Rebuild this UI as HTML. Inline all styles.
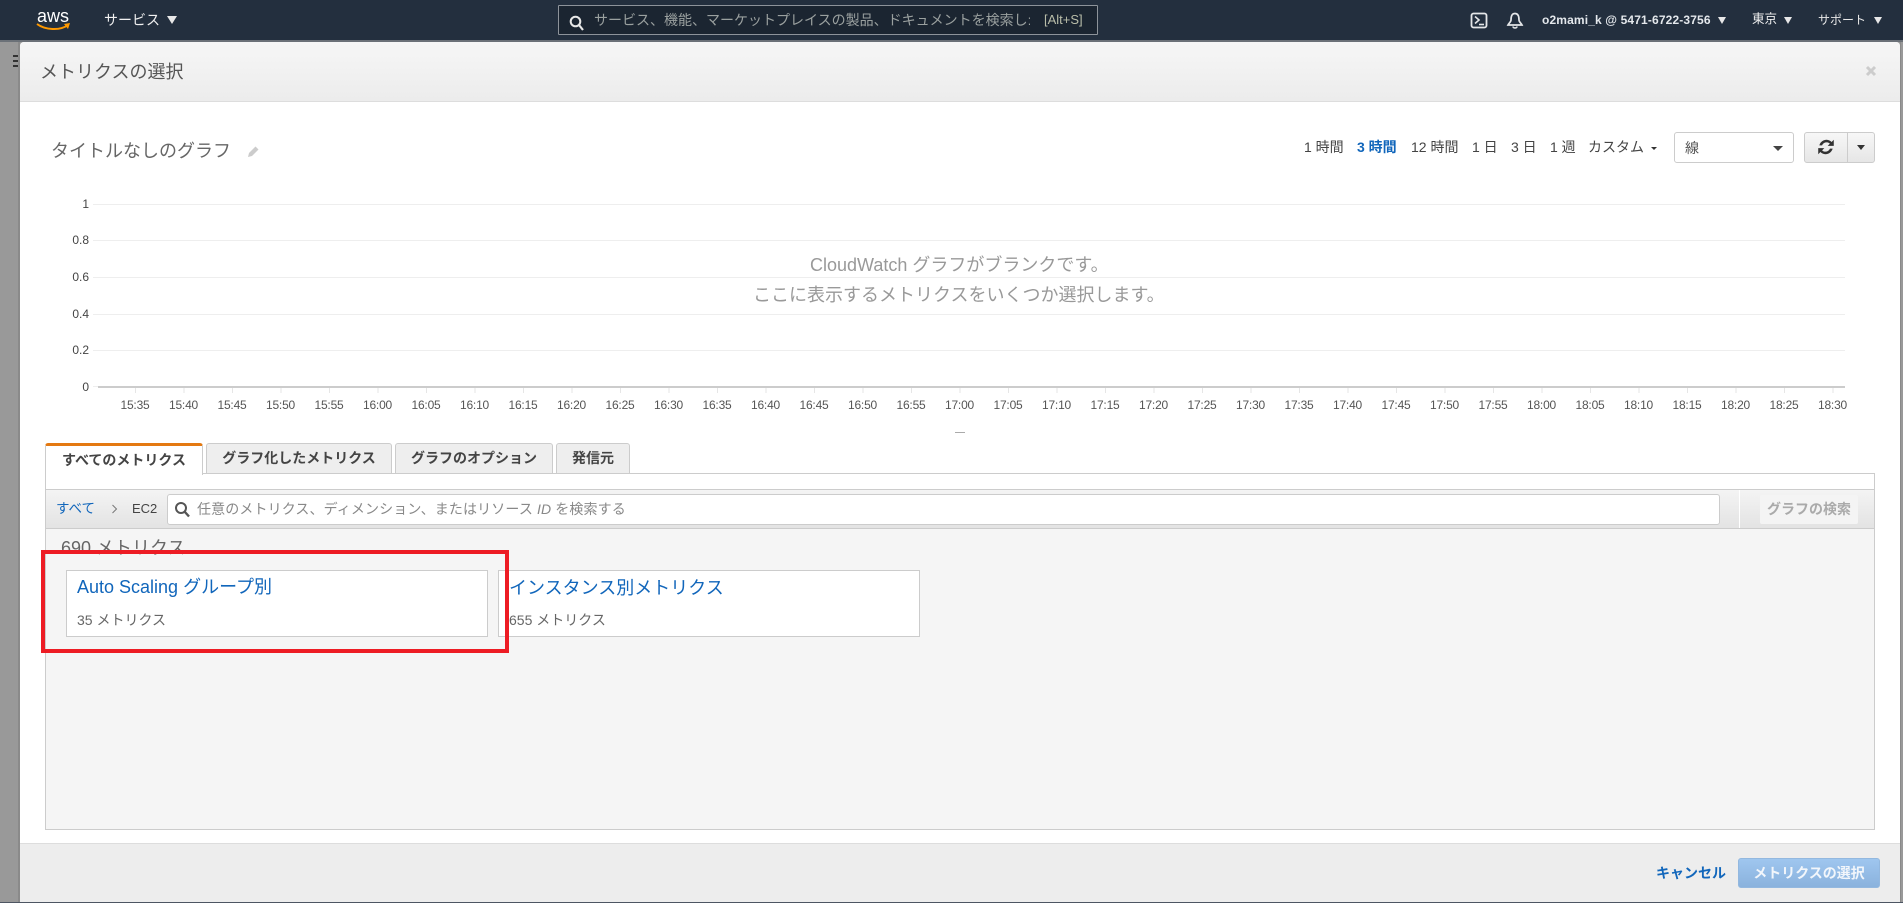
<!DOCTYPE html>
<html lang="ja"><head><meta charset="utf-8"><title>メトリクスの選択</title>
<style>
*{box-sizing:border-box}
html,body{margin:0;padding:0;width:1903px;height:903px;overflow:hidden;background:#999}
body{position:relative;font-family:"Liberation Sans","Noto Sans CJK JP",sans-serif;font-size:14px;color:#444}
.a{position:absolute;white-space:nowrap}
.t{position:absolute;white-space:nowrap;line-height:20px;height:20px}
.tri{position:absolute;width:0;height:0;border-left:5px solid transparent;border-right:5px solid transparent;border-top:8px solid #e8e8e8}
.car{position:absolute;width:0;height:0;border-left:4px solid transparent;border-right:4px solid transparent;border-top:4px solid #444}
.grid{position:absolute;left:93px;width:1752px;height:1px;background:#eee}
.yl{position:absolute;right:1814px;font-size:12px;line-height:14px;color:#444}
.tab{position:absolute;top:443px;height:31px;background:#eee;border:1px solid #ccc;border-radius:3px 3px 0 0;text-align:center;font-weight:bold;line-height:29px;font-size:14px;color:#444}
.card{position:absolute;top:570px;height:67px;background:#fff;border:1px solid #ccc}
#labels{position:absolute;left:110.75px;top:398px;display:flex;font-size:12px;line-height:14px;color:#555;letter-spacing:-.2px}
#labels span{width:48.5px;text-align:center;flex:none}
</style></head><body>

<!-- nav -->
<div class="a" style="left:0;top:0;width:1903px;height:41px;background:#232f3e"></div>
<div class="a" style="left:0;top:40px;width:1903px;height:2px;background:#6b7178"></div>
<div class="t" style="left:37px;top:6px;font-size:18px;color:#fff;line-height:20px">aws</div>
<svg class="a" style="left:36px;top:22px" width="35" height="10" viewBox="0 0 35 10"><path d="M1 2C9 8 24 9 32 3" fill="none" stroke="#f90" stroke-width="2"/><path d="M28 2L34 1L32 7" fill="#f90"/></svg>
<div class="t" style="left:104px;top:10px;color:#f0f0f0">サービス</div>
<div class="tri" style="left:167px;top:16px"></div>
<div class="a" style="left:558px;top:5px;width:540px;height:30px;background:#1b2531;border:1px solid #8d939a;border-radius:1px"></div>
<svg class="a" style="left:568px;top:15px" width="18" height="16" viewBox="0 0 18 16"><circle cx="7.5" cy="6.5" r="4.8" fill="none" stroke="#e8e8e8" stroke-width="2"/><path d="M11 10L15 15" stroke="#e8e8e8" stroke-width="2.2"/></svg>
<div class="t" style="left:594px;top:10px;width:436px;overflow:hidden;color:#9aa09f">サービス、機能、マーケットプレイスの製品、ドキュメントを検索し:</div>
<div class="t" style="left:1044px;top:10px;color:#b9bda9;font-size:13px">[Alt+S]</div>
<svg class="a" style="left:1470px;top:12px" width="18" height="17" viewBox="0 0 18 17"><rect x="1.5" y="1.5" width="15" height="14" rx="2" fill="none" stroke="#e4e6e8" stroke-width="1.8"/><path d="M5 4.5L9 8L5 11.5" fill="none" stroke="#e4e6e8" stroke-width="1.6"/><path d="M9 12.5H14" stroke="#e4e6e8" stroke-width="1.6"/></svg>
<svg class="a" style="left:1506px;top:12px" width="18" height="17" viewBox="0 0 18 17"><path d="M9 1.5C5.5 1.5 5 5 5 8C5 10 3 11 2 13H16C15 11 13 10 13 8C13 5 12.5 1.5 9 1.5Z" fill="none" stroke="#e4e6e8" stroke-width="1.7"/><path d="M7 14.5C7 16.5 11 16.5 11 14.5" fill="none" stroke="#e4e6e8" stroke-width="1.6"/></svg>
<div class="t" style="left:1542px;top:10px;font-size:12px;font-weight:bold;color:#e4e8ec;width:172px;letter-spacing:.14px">o2mami_k @ 5471-6722-3756</div>
<div class="tri" style="left:1718px;top:17px;border-top-width:7px;border-left-width:4.5px;border-right-width:4.5px"></div>
<div class="t" style="left:1752px;top:9px;font-size:12.5px;color:#f0f0f0">東京</div>
<div class="tri" style="left:1784px;top:17px;border-top-width:7px;border-left-width:4.5px;border-right-width:4.5px"></div>
<div class="t" style="left:1818px;top:10px;font-size:12px;color:#e8e8e8">サポート</div>
<div class="tri" style="left:1874px;top:17px;border-top-width:7px;border-left-width:4.5px;border-right-width:4.5px"></div>

<!-- background hamburger -->
<div class="a" style="left:13px;top:55px;width:7px;height:2px;background:#333"></div>
<div class="a" style="left:13px;top:60px;width:7px;height:2px;background:#333"></div>
<div class="a" style="left:13px;top:65px;width:7px;height:2px;background:#333"></div>

<!-- modal -->
<div class="a" style="left:18px;top:42px;width:2px;height:860px;background:#8a8a8a"></div>
<div class="a" style="left:1900px;top:42px;width:1px;height:860px;background:#8a8a8a"></div>
<div class="a" style="left:20px;top:42px;width:1880px;height:860px;background:#fff;border-radius:4px 4px 0 0"></div>
<div class="a" style="left:20px;top:42px;width:1880px;height:60px;background:linear-gradient(#f6f6f6,#ececec);border-bottom:1px solid #ddd;border-radius:4px 4px 0 0"></div>
<div class="t" style="left:40px;top:62px;font-size:18px;color:#555">メトリクスの選択</div>
<svg class="a" style="left:1865px;top:65px" width="12" height="12" viewBox="0 0 12 12"><path d="M2 2L10 10M10 2L2 10" stroke="#ccc" stroke-width="3"/></svg>

<div class="t" style="left:51px;top:141px;font-size:18px;color:#666">タイトルなしのグラフ</div>
<svg class="a" style="left:246px;top:145px" width="14" height="14" viewBox="0 0 14 14"><path d="M2 12L3 8L9.5 1.5L12.5 4.5L6 11Z" fill="#ccc"/></svg>

<div class="t" style="left:1304px;top:137px;color:#444">1 時間</div>
<div class="t" style="left:1357px;top:137px;color:#1166bb;font-weight:bold">3 時間</div>
<div class="t" style="left:1411px;top:137px;color:#444">12 時間</div>
<div class="t" style="left:1472px;top:137px;color:#444">1 日</div>
<div class="t" style="left:1511px;top:137px;color:#444">3 日</div>
<div class="t" style="left:1550px;top:137px;color:#444">1 週</div>
<div class="t" style="left:1588px;top:137px;color:#444">カスタム</div>
<div class="car" style="left:1651px;top:147px;border-width:3px 3px 0;border-top-color:#333;border-left-color:transparent;border-right-color:transparent"></div>

<div class="a" style="left:1674px;top:132px;width:120px;height:31px;border:1px solid #ccc;border-radius:3px;background:#fff"></div>
<div class="t" style="left:1685px;top:138px;color:#555">線</div>
<div class="car" style="left:1773px;top:146px;border-width:5px 5px 0"></div>
<div class="a" style="left:1804px;top:132px;width:71px;height:31px;border:1px solid #ccc;border-radius:3px;background:linear-gradient(#f7f7f7,#e6e6e6)"></div>
<div class="a" style="left:1847px;top:133px;width:1px;height:29px;background:#ccc"></div>
<svg class="a" style="left:1816px;top:137px" width="20" height="20" viewBox="0 0 18 18"><path d="M3 7.5C4 4 7 2.5 9.5 2.5C11.5 2.5 13 3.5 14 4.5L16 2.5V8H10.5L12.5 6C11.5 5 10.5 4.8 9.5 4.8C7.5 4.8 6 6 5.5 7.5Z M15 10.5C14 14 11 15.5 8.5 15.5C6.5 15.5 5 14.5 4 13.5L2 15.5V10H7.5L5.5 12C6.5 13 7.5 13.2 8.5 13.2C10.5 13.2 12 12 12.5 10.5Z" fill="#333"/></svg>
<div class="car" style="left:1857px;top:145px;border-width:5px 4.5px 0;border-top-color:#333"></div>

<!-- chart -->
<div class="grid" style="top:204px"></div>
<div class="grid" style="top:240px"></div>
<div class="grid" style="top:277px"></div>
<div class="grid" style="top:314px"></div>
<div class="grid" style="top:350px"></div>
<div class="yl" style="top:197px">1</div>
<div class="yl" style="top:233px">0.8</div>
<div class="yl" style="top:270px">0.6</div>
<div class="yl" style="top:307px">0.4</div>
<div class="yl" style="top:343px">0.2</div>
<div class="yl" style="top:380px">0</div>
<div class="a" style="left:93px;top:386px;width:5px;height:1px;background:#eee"></div>
<div class="a" style="left:98px;top:386px;width:1747px;height:2px;background:#ccc"></div>
<div class="a" style="left:134.5px;top:388px;width:1700px;height:5px;background:repeating-linear-gradient(90deg,#e6e6e6 0,#e6e6e6 1px,transparent 1px,transparent 48.5px)"></div>
<div id="labels"><span>15:35</span><span>15:40</span><span>15:45</span><span>15:50</span><span>15:55</span><span>16:00</span><span>16:05</span><span>16:10</span><span>16:15</span><span>16:20</span><span>16:25</span><span>16:30</span><span>16:35</span><span>16:40</span><span>16:45</span><span>16:50</span><span>16:55</span><span>17:00</span><span>17:05</span><span>17:10</span><span>17:15</span><span>17:20</span><span>17:25</span><span>17:30</span><span>17:35</span><span>17:40</span><span>17:45</span><span>17:50</span><span>17:55</span><span>18:00</span><span>18:05</span><span>18:10</span><span>18:15</span><span>18:20</span><span>18:25</span><span>18:30</span></div>
<div class="a" style="left:955px;top:432px;width:10px;height:1px;background:#aaa"></div>
<div class="t" style="left:810px;top:255px;font-size:18px;color:#999">CloudWatch グラフがブランクです。</div>
<div class="t" style="left:753px;top:285px;font-size:18px;color:#999">ここに表示するメトリクスをいくつか選択します。</div>

<!-- panel -->
<div class="a" style="left:45px;top:473px;width:1830px;height:357px;background:#f5f5f5;border:1px solid #ccc"></div>
<div class="a" style="left:46px;top:474px;width:1828px;height:15px;background:#fff"></div>
<div class="a" style="left:46px;top:489px;width:1828px;height:40px;background:linear-gradient(#f4f4f4,#e3e3e3);border-top:1px solid #ccc;border-bottom:1px solid #ccc"></div>
<div class="tab" style="left:45px;width:158px;background:#fff;border-top:3px solid #e47911;border-bottom:0;line-height:28px;height:32px">すべてのメトリクス</div>
<div class="tab" style="left:206px;width:186px">グラフ化したメトリクス</div>
<div class="tab" style="left:395px;width:158px">グラフのオプション</div>
<div class="tab" style="left:556px;width:74px">発信元</div>

<div class="t" style="left:56px;top:499px;color:#1166bb;font-size:13.5px">すべて</div>
<svg class="a" style="left:111px;top:504px" width="7" height="10" viewBox="0 0 7 10"><path d="M1.5 1L5.5 5L1.5 9" fill="none" stroke="#777" stroke-width="1"/></svg>
<div class="t" style="left:132px;top:499px;font-size:13px;color:#444">EC2</div>
<div class="a" style="left:167px;top:494px;width:1553px;height:31px;background:#fff;border:1px solid #ccc;border-radius:3px"></div>
<svg class="a" style="left:174px;top:501px" width="17" height="17" viewBox="0 0 17 17"><circle cx="7" cy="7" r="5" fill="none" stroke="#555" stroke-width="2"/><path d="M10.5 10.5L15 15.5" stroke="#555" stroke-width="2.4"/></svg>
<div class="t" style="left:197px;top:499px;color:#888;letter-spacing:.12px">任意のメトリクス、ディメンション、またはリソース <i>ID</i> を検索する</div>
<div class="a" style="left:1739px;top:490px;width:1px;height:38px;background:#fff"></div>
<div class="a" style="left:1760px;top:495px;width:98px;height:29px;background:#f4f4f4;border-radius:2px;text-align:center;font-weight:bold;color:#aaa;line-height:28px">グラフの検索</div>

<div class="t" style="left:61px;top:536px;font-size:18px;color:#666;line-height:24px;height:24px">690 メトリクス</div>
<div class="card" style="left:66px;width:422px"></div>
<div class="card" style="left:498px;width:422px"></div>
<div class="t" style="left:77px;top:577px;font-size:18px;color:#1166bb">Auto Scaling グループ別</div>
<div class="t" style="left:77px;top:610px;color:#666">35 メトリクス</div>
<div class="t" style="left:509px;top:578px;font-size:18px;color:#1166bb">インスタンス別メトリクス</div>
<div class="t" style="left:509px;top:610px;color:#666">655 メトリクス</div>
<div class="a" style="left:41px;top:550px;width:468px;height:103px;border:4px solid #ed1c24"></div>

<!-- footer -->
<div class="a" style="left:20px;top:843px;width:1880px;height:59px;background:#ededed;border-top:1px solid #ddd"></div>
<div class="t" style="left:1656px;top:863px;color:#1166bb;font-weight:bold">キャンセル</div>
<div class="a" style="left:1738px;top:858px;width:142px;height:30px;background:linear-gradient(#9fc6ef,#8ab2dd);border:1px solid #93b8df;border-radius:3px;text-align:center;color:#f2f6fb;font-weight:bold;line-height:28px">メトリクスの選択</div>
<div class="a" style="left:0;top:902px;width:1903px;height:1px;background:#4d5562"></div>
</body></html>
